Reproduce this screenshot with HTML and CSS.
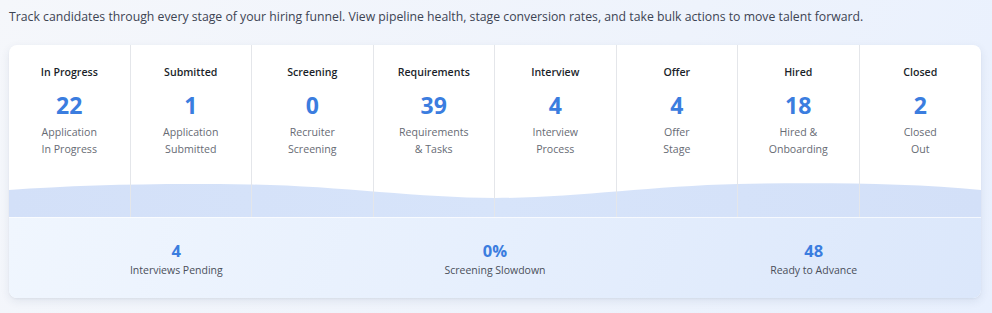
FILE: index.html
```html
<!DOCTYPE html>
<html lang="en">
<head>
<meta charset="utf-8">
<title>Hiring Pipeline</title>
<link rel="stylesheet" href="styles.css">
</head>
<body>
<div class="page">
  <p class="intro">Track candidates through every stage of your hiring funnel. View pipeline health, stage conversion rates, and take bulk actions to move talent forward.</p>
  <section class="card">
    <div class="stages">
      <svg class="wave" viewBox="0 0 972 34" preserveAspectRatio="none" aria-hidden="true">
        <defs>
          <linearGradient id="wg" x1="0" y1="0" x2="1" y2="0">
            <stop offset="0" stop-color="#d3e0f8"/>
            <stop offset="0.5" stop-color="#d7e4fa"/>
            <stop offset="1" stop-color="#d3e0f8"/>
          </linearGradient>
        </defs>
        <path d="M0 7 C 70 2, 150 0, 240 1.5 C 330 3, 410 15, 486 15 C 565 15, 640 3, 729 1 C 810 -0.5, 900 0, 972 7 L 972 34 L 0 34 Z" fill="url(#wg)"/>
      </svg>
      <div class="stage"><div class="stage-title">In Progress</div><div class="stage-num">22</div><div class="stage-sub">Application<br>In Progress</div></div>
      <div class="stage"><div class="stage-title">Submitted</div><div class="stage-num">1</div><div class="stage-sub">Application<br>Submitted</div></div>
      <div class="stage"><div class="stage-title">Screening</div><div class="stage-num">0</div><div class="stage-sub">Recruiter<br>Screening</div></div>
      <div class="stage"><div class="stage-title">Requirements</div><div class="stage-num">39</div><div class="stage-sub">Requirements<br>&amp; Tasks</div></div>
      <div class="stage"><div class="stage-title">Interview</div><div class="stage-num">4</div><div class="stage-sub">Interview<br>Process</div></div>
      <div class="stage"><div class="stage-title">Offer</div><div class="stage-num">4</div><div class="stage-sub">Offer<br>Stage</div></div>
      <div class="stage"><div class="stage-title">Hired</div><div class="stage-num">18</div><div class="stage-sub">Hired &amp;<br>Onboarding</div></div>
      <div class="stage"><div class="stage-title">Closed</div><div class="stage-num">2</div><div class="stage-sub">Closed<br>Out</div></div>
    </div>
    <div class="summary">
      <div class="stat"><div class="stat-num">4</div><div class="stat-label">Interviews Pending</div></div>
      <div class="stat"><div class="stat-num">0%</div><div class="stat-label">Screening Slowdown</div></div>
      <div class="stat"><div class="stat-num">48</div><div class="stat-label">Ready to Advance</div></div>
    </div>
  </section>
</div>
</body>
</html>
```

FILE: styles.css
```css
* { box-sizing: border-box; }

html, body {
  margin: 0;
  height: 100%;
}

body {
  font-family: "Open Sans", "Noto Sans", sans-serif;
  background: linear-gradient(120deg, #f5f7fb 0%, #eef3fc 60%, #e8f0fe 100%);
  color: #3c4150;
}

.page {
  padding: 8px 11px 15px 9px;
}

.intro {
  margin: 0 0 19px 0;
  font-size: 12.25px;
  line-height: 18px;
  color: #3d4453;
}

.card {
  background: #ffffff;
  border-radius: 8px;
  overflow: hidden;
  box-shadow: 0 3px 10px rgba(30, 50, 90, 0.09), 0 1px 2px rgba(30, 50, 90, 0.05);
}

.stages {
  position: relative;
  display: grid;
  grid-template-columns: repeat(8, 1fr);
  height: 172px;
}

.wave {
  position: absolute;
  left: 0;
  right: 0;
  bottom: 0;
  width: 100%;
  height: 34px;
  display: block;
  z-index: 0;
}

.stage {
  position: relative;
  z-index: 1;
  border-right: 1px solid #e4e6ea;
  text-align: center;
  padding-top: 19px;
}

.stage:last-child {
  border-right: none;
}

.stage-title {
  font-size: 10.6px;
  font-weight: 600;
  line-height: 16px;
  color: #1b1f2a;
}

.stage-num {
  margin-top: 10px;
  font-size: 23px;
  font-weight: 700;
  line-height: 30px;
  color: #3b7ddf;
}

.stage-sub {
  margin-top: 4px;
  font-size: 10.6px;
  line-height: 16.5px;
  color: #676b74;
}

.summary {
  display: grid;
  grid-template-columns: repeat(3, 1fr);
  align-items: center;
  height: 81px;
  padding: 0 8px;
  border-top: 1px solid rgba(255, 255, 255, 0.7);
  background: linear-gradient(110deg, #f0f6fe 0%, #e6effd 50%, #dbe7fb 100%);
}

.stat {
  text-align: center;
  padding-top: 2px;
}

.stat-num {
  font-size: 16.5px;
  font-weight: 700;
  line-height: 20px;
  color: #3b7ddf;
}

.stat-label {
  margin-top: 1px;
  font-size: 10.5px;
  line-height: 16px;
  color: #4a4f5a;
}
```
